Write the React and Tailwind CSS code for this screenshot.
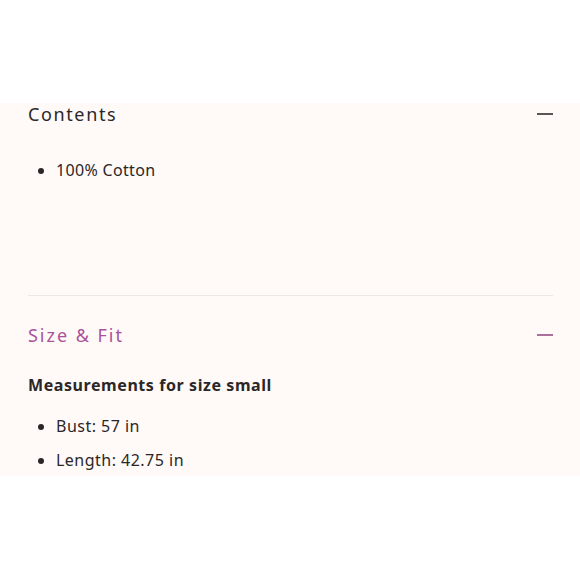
export default function App() {
  return (
    <div className="min-h-[580px] bg-white pt-[103px] font-['Noto_Sans','Open_Sans',sans-serif] text-[#2b2727]">
      <div className="bg-[#fffaf8] pb-[5px] pl-[28px] pr-[27px]">
        {/* Contents */}
        <div className="flex h-[22px] items-center justify-between">
          <h3 className="text-[18px] tracking-[0.09em]">Contents</h3>
          <span className="block h-[2px] w-[16px] bg-[#5a5656]" />
        </div>
        <ul className="mt-[34px] list-disc pl-[28px] text-[16px] tracking-[0.02em]">
          <li className="h-[22px] leading-[22px]">100% Cotton</li>
        </ul>
        <div className="mt-[114px] h-px bg-[#efe6e1]" />

        {/* Size & Fit */}
        <div className="mt-[28px] flex h-[22px] items-center justify-between">
          <h3 className="text-[18px] tracking-[0.11em] text-[#a9529a]">Size &amp; Fit</h3>
          <span className="block h-[2px] w-[16px] bg-[#a9709a]" />
        </div>
        <p className="mt-[28px] h-[22px] text-[16px] font-bold leading-[22px] tracking-[0.036em]">
          Measurements for size small
        </p>
        <ul className="mt-[19px] list-disc space-y-[12px] pl-[28px] text-[16px] tracking-[0.03em]">
          <li className="h-[22px] leading-[22px]">Bust: 57 in</li>
          <li className="h-[22px] leading-[22px]">Length: 42.75 in</li>
        </ul>
      </div>
    </div>
  );
}
